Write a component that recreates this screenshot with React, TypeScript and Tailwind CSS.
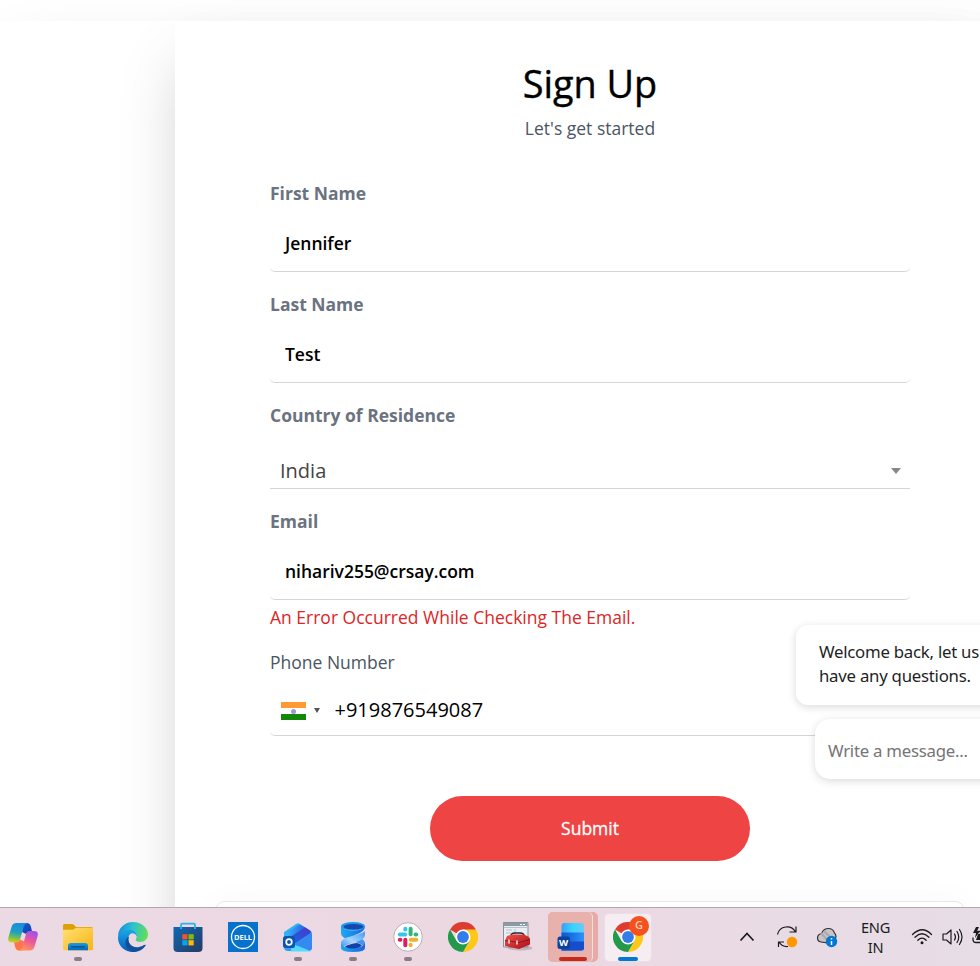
import type { ReactNode } from "react";

function Field({ label, value }: { label: string; value: string }) {
  return (
    <div className="mb-5">
      <label className="block h-[25px] text-[17.5px] leading-[25px] font-bold text-[#6b7280]">{label}</label>
      <div className="mt-[6px] flex h-[60px] items-center rounded-[5px] border-b border-gray-300 px-[15px] pt-[3px] text-[17.5px] font-semibold tracking-[-0.02px] text-black">
        {value}
      </div>
    </div>
  );
}

function Slot({ children, open = false }: { children: ReactNode; open?: boolean }) {
  return (
    <div className="relative flex h-full w-[55px] shrink-0 items-center justify-center">
      {children}
      {open && <span className="absolute bottom-[5px] left-[23.5px] h-1 w-2 rounded-full bg-[#8a7d86]" />}
    </div>
  );
}

function Copilot() {
  return (
    <svg width="30" height="30" viewBox="0 0 30 30">
      <defs>
        <linearGradient id="cpA" x1="0.2" y1="0" x2="0" y2="1">
          <stop offset="0" stopColor="#1790df" />
          <stop offset=".4" stopColor="#1c9fc4" />
          <stop offset=".72" stopColor="#7cc04a" />
          <stop offset="1" stopColor="#f2cf1d" />
        </linearGradient>
        <linearGradient id="cpB" x1="0.7" y1="0" x2="0.3" y2="1">
          <stop offset="0" stopColor="#a150ea" />
          <stop offset=".5" stopColor="#ee5a94" />
          <stop offset="1" stopColor="#ff9a56" />
        </linearGradient>
        <linearGradient id="cpC" x1="0" y1="0" x2="1" y2="1">
          <stop offset="0" stopColor="#0f66c8" />
          <stop offset="1" stopColor="#1634b4" />
        </linearGradient>
      </defs>
      <path d="M15 1h4q3 0 4 4l1 4.500h-2.500q-2.500 0-3.500 2.500l-4-2z" fill="url(#cpC)" />
      <path d="M15 28.500h-4q-3 0-4-4L6 20h2.500q2.500 0 3.500-2.500l4 2z" fill="#ff7448" />
      <path d="M8.500 1H20q-3.500.5-4.500 4L12 17.500q-1 3-4 3H4q-5 0-3.500-5.500l3-10Q4.500 1 8.500 1z" fill="url(#cpA)" />
      <path d="M21.500 28.500H10q3.500-.5 4.500-4L18 12q1-3 4-3h4q5 0 3.500 5.500l-3 10q-1 4-5 4z" fill="url(#cpB)" />
    </svg>
  );
}

function Folder() {
  return (
    <svg width="30" height="30" viewBox="0 0 30 30">
      <defs>
        <linearGradient id="fd" x1="0" y1="0" x2="1" y2="1">
          <stop offset="0" stopColor="#ffe078" />
          <stop offset="1" stopColor="#fab40e" />
        </linearGradient>
        <linearGradient id="fb" x1="0" y1="0" x2="0" y2="1">
          <stop offset="0" stopColor="#189ee0" />
          <stop offset="1" stopColor="#0868b8" />
        </linearGradient>
      </defs>
      <path d="M0 3.500Q0 2 1.500 2H9q1 0 1.800.8L13 5h15.500Q30 5 30 6.500V12H0z" fill="#dfa006" />
      <path d="M0 7.800h9.500q1 0 1.700-.7l1-.8q.5-.5 1.300-.5H30v21q0 1.400-1.400 1.400H1.400Q0 28.200 0 26.800z" fill="url(#fd)" />
      <path d="M5 28.200V24q0-3 3-3h14q3 0 3 3v4.200z" fill="url(#fb)" />
      <path d="M8.500 24.800h13" stroke="#034b91" strokeWidth="1.200" strokeLinecap="round" />
    </svg>
  );
}

function Edge() {
  return (
    <svg width="30" height="30" viewBox="0 0 30 30">
      <defs>
        <linearGradient id="egA" x1="0" y1=".3" x2="1" y2=".5">
          <stop offset="0" stopColor="#168cd8" />
          <stop offset=".45" stopColor="#2dbfd1" />
          <stop offset="1" stopColor="#62df57" />
        </linearGradient>
        <linearGradient id="egB" x1="0" y1="0" x2="0" y2="1">
          <stop offset="0" stopColor="#1aa7e6" />
          <stop offset="1" stopColor="#075cc0" />
        </linearGradient>
      </defs>
      <path d="M0 14.500C0 6.300 6.500 0 15 0s15 6 15 12.300C30 17 26.500 20 22.500 20c-3.500 0-5-1.200-5-2.200 0-.7 1-1.300 1-3.200 0-2.500-2.300-5.100-7-5.100C5 9.500 0 13 0 14.500z" fill="url(#egA)" />
      <path d="M0 15c.6-4.200 5.200-7.500 10.800-7.500 4.500 0 7.900 3 7.900 7.100-1-2-2.500-3-4.300-3-2.400 0-4.200 2-4.200 5.400 0 4.500 3.300 9 10 9 1.500 0 3-.2 4.200-.7C21.800 28.500 18.500 30 15 30 6.300 30-.5 23 0 15z" fill="url(#egB)" />
      <path d="M11 14.500c-2.200 5.700 2.500 12 10 10.600 2.200-.3 4.500-1.900 6.200-2.800.7-.3 1.200.2.800.8C25.300 27.700 20.500 30 15.500 30 8.200 29 4 18.800 11 14.500z" fill="#11509b" />
      <circle cx="14.900" cy="15" r="3.500" fill="#ead7e3" />
      <path d="M15 17.500c1.500 3 5.500 4.200 10 2.700l3-1.200 1 4-5-.5c-5.500 1.200-9.500-1-9-5z" fill="#ead7e3" />
    </svg>
  );
}

function Store() {
  return (
    <svg width="30" height="30" viewBox="0 0 30 30">
      <defs>
        <linearGradient id="st" x1="0" y1="0" x2="1" y2="1">
          <stop offset="0" stopColor="#1168b4" />
          <stop offset="1" stopColor="#263a63" />
        </linearGradient>
      </defs>
      <path d="M.5 5h29v21q0 4-4 4h-21q-4 0-4-4z" fill="url(#st)" />
      <path d="M8 7V3q0-1.300 1.300-1.300h11.400Q22 1.700 22 3v4" fill="none" stroke="#25b4ee" strokeWidth="1.800" />
      <path d="M9.300 12.200h5.200v5.200H9.300z" fill="#f35325" />
      <path d="M15.500 12.200h5.200v5.200h-5.200z" fill="#81bc06" />
      <path d="M9.300 18.200h5.200v5.200H9.300z" fill="#05a6f0" />
      <path d="M15.500 18.200h5.200v5.200h-5.200z" fill="#ffba08" />
    </svg>
  );
}

function Dell() {
  return (
    <svg width="30" height="30" viewBox="0 0 30 30">
      <path d="M0 0h30v30H0z" fill="#0672cb" />
      <circle cx="15" cy="15" r="11.500" fill="none" stroke="#fff" strokeWidth="1.300" />
      <text x="15" y="17.800" textAnchor="middle" fontSize="7.800" fontWeight="700" textLength="18" lengthAdjust="spacingAndGlyphs" fill="#fff">DELL</text>
    </svg>
  );
}

function Outlook() {
  return (
    <svg width="30" height="30" viewBox="0 0 30 30">
      <defs>
        <linearGradient id="olA" x1="0" y1="0" x2="1" y2="1">
          <stop offset="0" stopColor="#3dcaff" />
          <stop offset="1" stopColor="#2875ea" />
        </linearGradient>
        <linearGradient id="olB" x1="0" y1="1" x2="1" y2="0">
          <stop offset="0" stopColor="#1769e0" />
          <stop offset="1" stopColor="#4a37cf" />
        </linearGradient>
        <linearGradient id="olC" x1="0" y1="0" x2="1" y2="0">
          <stop offset="0" stopColor="#39b9fa" />
          <stop offset="1" stopColor="#2365e3" />
        </linearGradient>
      </defs>
      <path d="M1 10 13 2q2-1.500 4 0l10 6.500q2 1.300 2 3.500v13q0 4-4 4H5q-4 0-4-4z" fill="url(#olA)" />
      <path d="M1.500 11 13 3q2-1.200 4-.5L5 15q-4-1-3.500-4z" fill="#35aaf3" />
      <path d="m2 12 14.500-9.500L22 5.500 5 17z" fill="url(#olC)" />
      <path d="M4 17 22 5.300l5 3.300q1.500 1 .5 2.400L11 22H4z" fill="url(#olB)" />
      <path d="M10 23 29 11.500V25q0 4-4 4H12z" fill="#348af0" />
      <path d="M8 23q0-2 2-1l17.500 7q-1 .5-3 .5H8z" fill="#53dbff" />
      <rect y="14" width="12" height="12" rx="2.500" fill="#0b56b1" />
      <circle cx="6" cy="20" r="2.800" fill="none" stroke="#fff" strokeWidth="1.700" />
    </svg>
  );
}

function Helix() {
  return (
    <svg width="30" height="30" viewBox="0 0 30 30">
      <defs>
        <linearGradient id="hxA" x1="0" y1="0" x2="1" y2="0">
          <stop offset="0" stopColor="#1cabf5" />
          <stop offset="1" stopColor="#1a66dc" />
        </linearGradient>
        <linearGradient id="hxB" x1="0" y1="1" x2="1" y2="0">
          <stop offset="0" stopColor="#2c8df3" />
          <stop offset=".45" stopColor="#a5d6fd" />
          <stop offset="1" stopColor="#3c97f2" />
        </linearGradient>
      </defs>
      <path d="M3 5q1 4 7 6l11 4.500q6 2 6 6V26q-2-3.500-7-5L9 17q-6-2-6-6z" fill="#3f96f3" />
      <path d="M3 4v7q1 3 6 5l8-3q10-3 10-9-3 4.500-12 4.500T3 4z" fill="url(#hxA)" />
      <path d="M27 9v4q0 3.500-6 6l-11 3.500q-6 2-7 4.500v-6q0-3.500 6-5.500l12-3.500q5-1.500 6-3z" fill="url(#hxB)" />
      <path d="M27 21v5q0 4-12 4T3 26v-4q2 4 12 4t12-5z" fill="url(#hxA)" />
      <ellipse cx="15" cy="4.200" rx="12" ry="4.200" fill="#1a9cef" />
      <ellipse cx="15.500" cy="4.800" rx="10" ry="2.800" fill="#1648ad" />
      <path d="M7 24.500q4-2.500 12-3.500 4 1.200 5 2.500-3 3-9 3t-8-2z" fill="#1440a9" />
    </svg>
  );
}

function Slack() {
  return (
    <svg width="30" height="30" viewBox="0 0 30 30">
      <circle cx="15" cy="15" r="14.300" fill="#fff" stroke="#b9aeb5" strokeWidth="1" />
      <g strokeWidth="4" strokeLinecap="round">
        <path d="M6.800 12.500h5.400" stroke="#36c5f0" />
        <path d="M12.300 6.800v.6" stroke="#36c5f0" />
        <path d="M17.600 6.800v5.400" stroke="#2eb67d" />
        <path d="M22.600 12.500h.6" stroke="#2eb67d" />
        <path d="M17.800 17.800h5.400" stroke="#ecb22e" />
        <path d="M17.600 22.800v.4" stroke="#ecb22e" />
        <path d="M12.300 17.800v5.400" stroke="#e01e5a" />
        <path d="M6.800 17.800h.6" stroke="#e01e5a" />
      </g>
    </svg>
  );
}

function Chrome() {
  return (
    <svg width="30" height="30" viewBox="0 0 30 30">
      <path d="M15 15 2 7.500A15 15 0 0 1 28 7.500z" fill="#dd3c31" />
      <path d="M15 15V7.500h13A15 15 0 0 1 15 30l6.500-11z" fill="#fec916" />
      <path d="M15 15 8.500 18.800 2 7.500A15 15 0 0 0 15 30l6.500-11.200z" fill="#239a49" />
      <circle cx="15" cy="15" r="7.500" fill="#fff" />
      <circle cx="15" cy="15" r="5.900" fill="#347ce8" />
    </svg>
  );
}

function Toolbox() {
  return (
    <svg width="30" height="30" viewBox="0 0 30 30">
      <defs>
        <linearGradient id="tb" x1="0" y1="0" x2="1" y2="1">
          <stop offset="0" stopColor="#f1534c" />
          <stop offset="1" stopColor="#a90c16" />
        </linearGradient>
      </defs>
      <path d="M.5.500H25V25H.5z" fill="#e8eef3" stroke="#87939a" />
      <path d="M1 1h23.500v3H1z" fill="#8c99a2" />
      <path d="M17 2.500h2m1 0h2" stroke="#fff" />
      <path d="M3 8h6m-6 3h5m4-4v9M1 5.500h23" stroke="#b7c2ca" />
      <ellipse cx="17" cy="26" rx="12.500" ry="2.500" fill="#776f78" opacity=".35" />
      <path d="M8 14q0-3 4-3h5q4 0 4 3" fill="none" stroke="#30272b" strokeWidth="1.500" />
      <path d="m4 14 5-1.500h12l5 2.500 1 2v5.500l-11 4.500L2 24v-5.500z" fill="url(#tb)" />
      <path d="m2 18.500 14 2 11-3" stroke="#7c1015" strokeWidth=".8" fill="none" />
      <path d="M6 17.500v4m8-3v4" stroke="#e6e2e1" strokeWidth="1.500" />
    </svg>
  );
}

function Word() {
  return (
    <svg className="-ml-[3px]" width="30" height="30" viewBox="0 0 30 30">
      <defs>
        <linearGradient id="wd" x1="0" y1="0" x2="1" y2="0">
          <stop offset="0" stopColor="#3d9cfa" />
          <stop offset=".5" stopColor="#39d3ff" />
          <stop offset="1" stopColor="#6ac9ff" />
        </linearGradient>
        <linearGradient id="wm" x1="0" y1="0" x2="1" y2="0">
          <stop offset="0" stopColor="#0c55ce" />
          <stop offset="1" stopColor="#2d91fb" />
        </linearGradient>
      </defs>
      <rect x="5.500" y="1" width="22.500" height="27.500" rx="3" fill="url(#wd)" />
      <path d="M5.500 10.500H28V25q0 3.500-3 3.500H5.500z" fill="url(#wm)" />
      <path d="M5.500 19.500H28V26q0 2.500-2.500 2.500h-20z" fill="#174ccb" />
      <rect x="1.500" y="14.500" width="12.500" height="12.500" rx="2.500" fill="#0a439d" />
      <text x="7.700" y="24" textAnchor="middle" fontSize="9.500" fontWeight="700" fill="#fff">W</text>
    </svg>
  );
}

export default function App() {
  return (
    <div className="h-[966px] w-[980px] overflow-hidden bg-white font-['Open_Sans',sans-serif]">
      <main className="relative flex h-[907px] w-full overflow-hidden pt-[21px]">
        <div className="flex h-[1100px] w-[1005px] shrink-0 bg-white pl-[175px] shadow-[0_31px_62px_-15px_rgba(0,0,0,0.25)]">
          <section className="w-[830px] rounded-[5px] bg-white px-[95px] pt-[35px] shadow-[0_31px_62px_-15px_rgba(0,0,0,0.25)]">
            <header className="mb-10 text-center">
              <h1 className="h-[60px] text-[37.8px] leading-[56px] text-black [-webkit-text-stroke:0.4px_black]">Sign Up</h1>
              <p className="h-[25px] text-[17.5px] leading-[25px] text-[#4b5563]">Let's get started</p>
            </header>
            <form>
              <Field label="First Name" value="Jennifer" />
              <Field label="Last Name" value="Test" />
              <div className="mb-5">
                <label className="block h-[25px] text-[17.5px] leading-[25px] font-bold text-[#6b7280]">Country of Residence</label>
                <div className="mt-[23px] flex h-[38px] items-center justify-between border-b border-gray-300 pt-0.5 pr-[9px] pl-[10px] text-[20px] text-[#444]">
                  <span>India</span>
                  <span className="size-0 border-x-[5px] border-t-[6px] border-x-transparent border-t-[#888]" />
                </div>
              </div>
              <Field label="Email" value="nihariv255@crsay.com" />
              <p className="-mt-[15px] h-[25px] text-[17.5px] leading-[25px] text-[#dc2626]">An Error Occurred While Checking The Email.</p>
              <label className="mt-5 block h-[25px] text-[17.5px] leading-[25px] text-[#4b5563]">Phone Number</label>
              <div className="mt-[10px] flex h-[51px] items-center rounded-[5px] border-b border-gray-300 pl-[11px] text-[20px] text-black">
                <span className="mt-[2px] flex h-[18px] w-[25px] flex-col">
                  <span className="h-1.5 bg-[#ff9933]" />
                  <span className="flex h-1.5 items-center justify-center bg-white">
                    <span className="size-[5px] rounded-full bg-[#9999d4]" />
                  </span>
                  <span className="h-1.5 bg-[#138808]" />
                </span>
                <span className="ml-2 size-0 border-x-[3px] border-t-[5px] border-x-transparent border-t-[#555]" />
                <span className="ml-[14.500px]">+919876549087</span>
              </div>
              <button type="button" className="mx-auto mt-[60px] block h-[65px] w-80 rounded-full bg-[#ef4444] text-[17.5px] text-white [-webkit-text-stroke:0.3px_white]">
                Submit
              </button>
            </form>
            <div className="-mx-[55px] mt-10 h-[100px] rounded-[10px] border border-[#e8e8e8] bg-white shadow-[0_0_35px_rgba(0,0,0,0.03)]" />
          </section>
        </div>
        <aside className="absolute top-[625px] left-[796px] font-['Noto_Sans',sans-serif] text-[16.8px] tracking-[-0.25px]">
          <div className="h-20 w-[300px] rounded-xl bg-white pt-[15px] pl-[23px] leading-6 whitespace-nowrap text-[#1f1f1f] shadow-[0_2px_8px_rgba(0,0,0,0.15)]">
            <p>Welcome back, let us</p>
            <p>have any questions.</p>
          </div>
          <div className="mt-[14px] ml-[19px] flex h-[60px] w-[281px] items-center rounded-[15px] bg-white pt-[3px] pl-[13px] text-[#757575] shadow-[0_2px_8px_rgba(0,0,0,0.15)]">
            Write a message...
          </div>
        </aside>
      </main>
      <footer className="flex h-[59px] items-center overflow-hidden border-t border-[#b3a6ae] bg-linear-to-r from-[#ebd9e4] via-[#ecd8e1] to-[#e7dde7]">
        <nav className="-ml-[4.500px] flex h-full">
          <Slot><Copilot /></Slot>
          <Slot open><Folder /></Slot>
          <Slot><Edge /></Slot>
          <Slot><Store /></Slot>
          <Slot><Dell /></Slot>
          <Slot open><Outlook /></Slot>
          <Slot open><Helix /></Slot>
          <Slot open><Slack /></Slot>
          <Slot><Chrome /></Slot>
          <Slot><Toolbox /></Slot>
          <Slot>
            <div className="h-[50px] w-[50px] rounded-[5px] bg-[#e7aaa7]">
              <div className="relative flex h-full w-[45px] items-center justify-center rounded-[5px] border-r border-[#f6dedd] bg-[#e9b1ac] pl-1">
                <Word />
                <span className="absolute bottom-[1px] left-[11px] h-1 w-7 rounded-full bg-[#c42b1c]" />
              </div>
            </div>
          </Slot>
          <Slot>
            <div className="relative flex h-[49px] w-12 items-center justify-center rounded-[5px] border border-[#eadfe5] bg-[#f5edf1]">
              <Chrome />
              <span className="absolute top-[2px] right-[2px] flex size-5 items-center justify-center rounded-full bg-[#f4511e] text-[11px] font-semibold text-[#ffcbb9]">G</span>
              <span className="absolute bottom-0 left-[13px] h-1 w-5 rounded-full bg-[#0078d4]" />
            </div>
          </Slot>
        </nav>
        <div className="ml-[71px] flex h-full items-center text-[#1b1b1b]">
          <svg width="40" height="30" viewBox="0 0 40 30" fill="none" stroke="currentColor" strokeWidth="1.700">
            <path d="m13.500 18.500 6.500-7 6.500 7" />
          </svg>
          <svg width="40" height="30" viewBox="0 0 40 30" fill="none" stroke="currentColor" strokeWidth="1.200">
            <path d="M10.500 12.500A9.700 9.700 0 0 1 28.500 10M22.500 10h6.500V4.500" />
            <path d="M11.500 25v-5H17M12 20q3 5 9 4.500" />
            <circle cx="25" cy="20" r="5.200" fill="#ff9800" stroke="none" />
          </svg>
          <svg width="40" height="30" viewBox="0 0 40 30">
            <path d="M14 20q-3.500-.500-3.500-4t4-4.500q2-5 7-5 4.500 0 6 4.500 1.500 1 1.500 4L22 21z" fill="#c7c4c5" stroke="#343234" strokeWidth="1.200" />
            <path d="m17 9 9 9m-12-7 8 9" stroke="#aaa" strokeWidth="2" />
            <circle cx="24.500" cy="19.500" r="5.700" fill="#0078d4" />
            <path d="M24.500 16v1.500m0 1.500v4" stroke="#fff" strokeWidth="1.500" />
          </svg>
          <div className="ml-px w-[56px] text-center font-['Noto_Sans',sans-serif] text-[14.600px] leading-5 tracking-[-0.3px]">
            <p>ENG</p>
            <p>IN</p>
          </div>
          <svg className="ml-[3px]" width="30" height="30" viewBox="0 0 30 30" fill="none" stroke="currentColor" strokeWidth="1.300" strokeLinecap="round">
            <path d="M5.500 12.500q10-9.500 19 0M8 15.300q7-7 14 0M10.800 18.200q4.200-4.200 8.400 0" />
            <circle cx="15" cy="20.700" r="1.500" fill="currentColor" stroke="none" />
          </svg>
          <svg className="ml-px" width="30" height="30" viewBox="0 0 30 30" fill="none" stroke="currentColor" strokeWidth="1.200" strokeLinejoin="round" strokeLinecap="round">
            <path d="M5 12h3.500L13 8v14l-4.500-4H5zM16.500 12q2 3 0 6M19 9.500q3.500 5.500 0 11M21.500 7.500q5 7.500 0 15" />
          </svg>
          <svg className="ml-[4px]" width="30" height="30" viewBox="0 0 30 30">
            <path d="M4.500 9.500H24v11H4q-3 0-3-3v-2" fill="none" stroke="currentColor" strokeWidth="1.300" />
            <path d="m6 12 13-1v7H4zM4 5 1 11h3l-1 5 5-7H5l2-4z" fill="currentColor" />
          </svg>
        </div>
      </footer>
    </div>
  );
}
